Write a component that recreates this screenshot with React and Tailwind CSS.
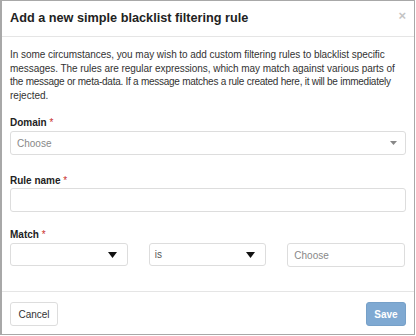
import React from 'react';

function Caret() {
  return (
    <svg width="9" height="6" viewBox="0 0 9 6" className="shrink-0">
      <path d="M0 0 L9 0 L4.5 6 Z" fill="#111" />
    </svg>
  );
}

export default function App() {
  return (
    <div className="w-[416px] h-[336px] bg-white" style={{ fontFamily: '"Liberation Sans", Arial, sans-serif' }}>
      <div className="w-[415px] h-[335px] border border-l-2 border-[#a8a8a8] flex flex-col text-[#333]">
        {/* Header */}
        <div className="h-[36px] shrink-0 flex items-center justify-between pl-[8px] pr-[8px] border-b border-[#e5e5e5]">
          <h4 className="text-[12.7px] font-bold text-[#222]">Add a new simple blacklist filtering rule</h4>
          <span className="text-[13px] leading-none text-[#c4c4c4] font-bold -mt-[6px]">×</span>
        </div>

        {/* Body */}
        <div className="flex-1 px-[8px] pt-[11px]">
          <p className="text-[10px] leading-[13.5px] text-[#333] whitespace-nowrap">
            <span className="block tracking-[-0.05px]">In some circumstances, you may wish to add custom filtering rules to blacklist specific</span>
            <span className="block tracking-[-0.05px]">messages. The rules are regular expressions, which may match against various parts of</span>
            <span className="block tracking-[-0.26px]">the message or meta-data. If a message matches a rule created here, it will be immediately</span>
            <span className="block">rejected.</span>
          </p>

          <div className="mt-[15px]">
            <div className="text-[10px] leading-[12px] font-bold text-[#222] mb-[2px]">
              Domain <span className="text-[#c9302c] font-normal">*</span>
            </div>
            <div className="h-[24px] border border-[#ddd] rounded-[3px] flex items-center justify-between pl-[6px] pr-[8px]">
              <span className="text-[10px] text-[#888]">Choose</span>
              <svg width="7" height="4" viewBox="0 0 7 4">
                <path d="M0 0 L7 0 L3.5 4 Z" fill="#888" />
              </svg>
            </div>
          </div>

          <div className="mt-[20px]">
            <div className="text-[10px] leading-[12px] font-bold text-[#222] mb-[1px]">
              Rule name <span className="text-[#c9302c] font-normal">*</span>
            </div>
            <div className="h-[24px] border border-[#ddd] rounded-[3px]" />
          </div>

          <div className="mt-[17px]">
            <div className="text-[10px] leading-[12px] font-bold text-[#222] mb-[2px]">
              Match <span className="text-[#c9302c] font-normal">*</span>
            </div>
            <div className="grid grid-cols-3 gap-[21px] pr-[1px]">
              <div className="h-[23px] border border-[#ddd] rounded-[3px] flex items-center justify-end pr-[10px]">
                <Caret />
              </div>
              <div className="h-[23px] border border-[#ddd] rounded-[3px] flex items-center justify-between pl-[5px] pr-[10px]">
                <span className="text-[10px] text-[#555]">is</span>
                <Caret />
              </div>
              <div className="h-[24px] border border-[#ddd] rounded-[3px] flex items-center pl-[6px]">
                <span className="text-[10px] text-[#888]">Choose</span>
              </div>
            </div>
          </div>
        </div>

        {/* Footer */}
        <div className="h-[43px] shrink-0 border-t border-[#e5e5e5] flex items-start justify-between px-[8px] pt-[10px]">
          <button className="h-[24px] w-[48px] border border-[#ddd] rounded-[3px] text-[10px] text-[#333] bg-white">
            Cancel
          </button>
          <button className="h-[24px] w-[40px] rounded-[3px] text-[10px] font-bold text-white bg-[#7fa9d2] border border-[#76a0c8]">
            Save
          </button>
        </div>
      </div>
    </div>
  );
}
